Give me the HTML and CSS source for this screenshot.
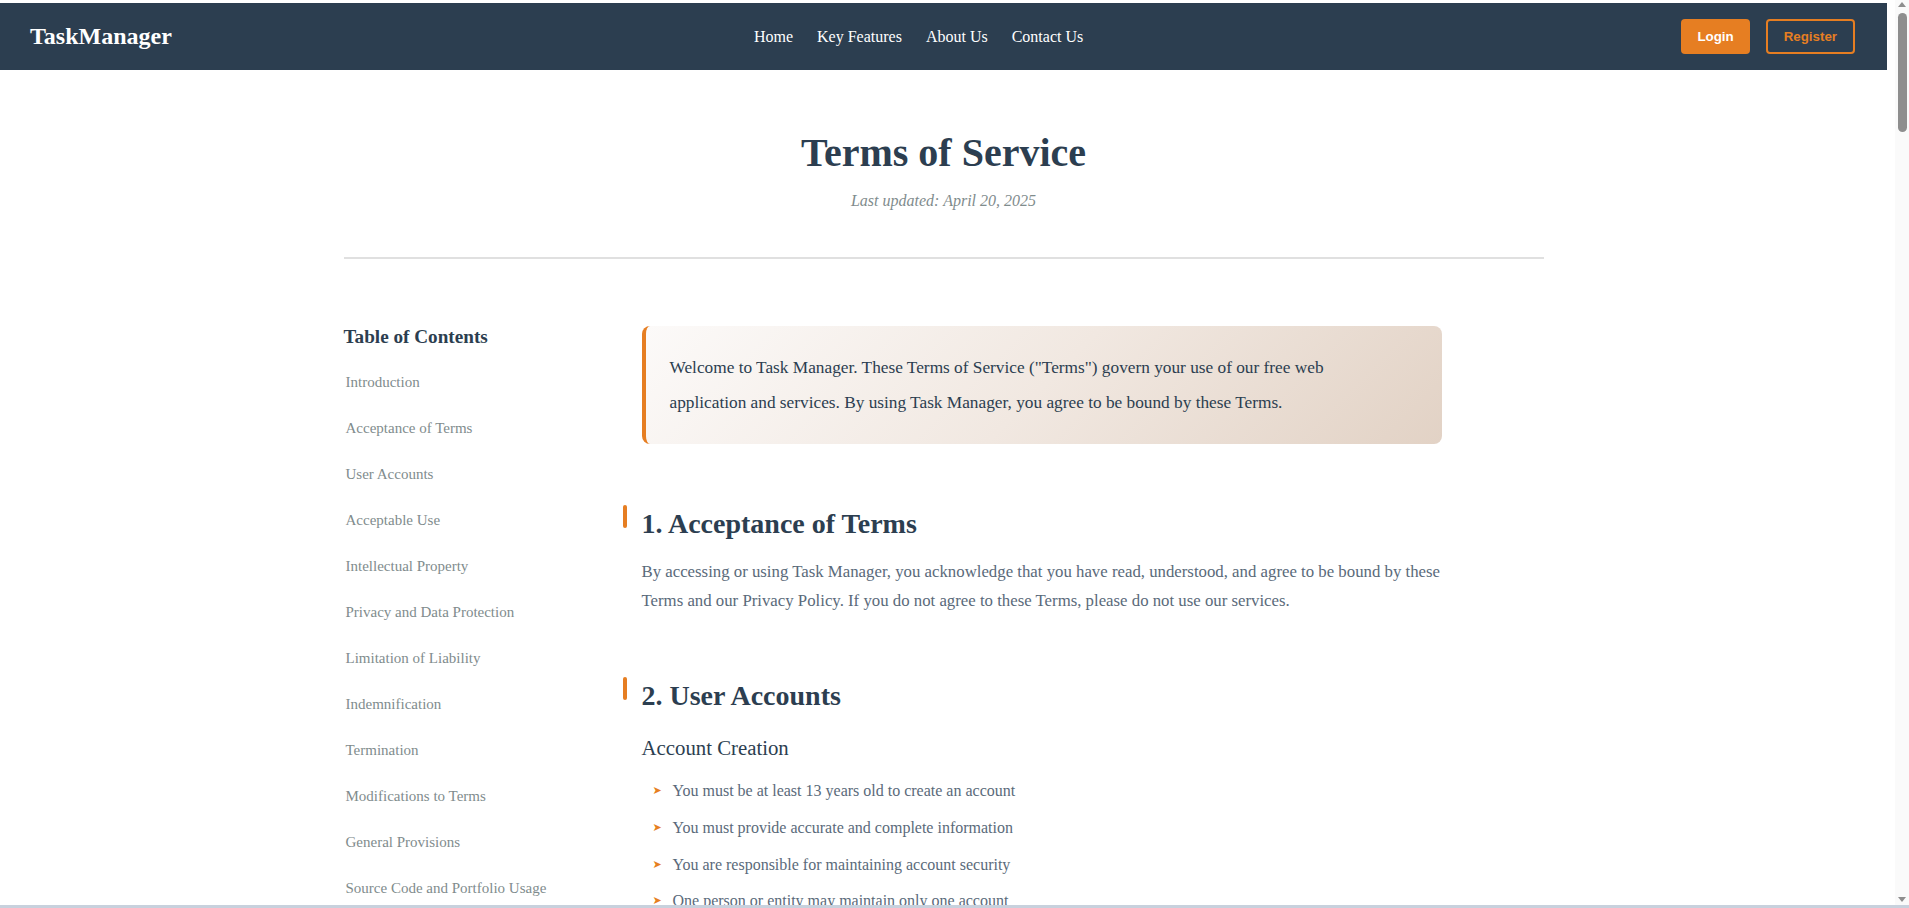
FILE: index.html
```html
<!DOCTYPE html>
<html lang="en">
<head>
<meta charset="utf-8">
<title>Terms of Service - TaskManager</title>
<link rel="stylesheet" href="styles.css">
</head>
<body>
<header class="site-header">
  <div class="logo">TaskManager</div>
  <nav class="main-nav">
    <ul>
      <li><a href="#">Home</a></li>
      <li><a href="#">Key Features</a></li>
      <li><a href="#">About Us</a></li>
      <li><a href="#">Contact Us</a></li>
    </ul>
  </nav>
  <div class="auth">
    <button class="btn btn-login">Login</button>
    <button class="btn btn-register">Register</button>
  </div>
</header>

<main class="page">
  <section class="page-head">
    <h1>Terms of Service</h1>
    <p class="updated">Last updated: April 20, 2025</p>
  </section>

  <div class="layout">
    <aside class="toc">
      <h3>Table of Contents</h3>
      <ul>
        <li><a href="#intro">Introduction</a></li>
        <li><a href="#acceptance">Acceptance of Terms</a></li>
        <li><a href="#accounts">User Accounts</a></li>
        <li><a href="#use">Acceptable Use</a></li>
        <li><a href="#ip">Intellectual Property</a></li>
        <li><a href="#privacy">Privacy and Data Protection</a></li>
        <li><a href="#liability">Limitation of Liability</a></li>
        <li><a href="#indemnification">Indemnification</a></li>
        <li><a href="#termination">Termination</a></li>
        <li><a href="#modifications">Modifications to Terms</a></li>
        <li><a href="#general">General Provisions</a></li>
        <li><a href="#source">Source Code and Portfolio Usage</a></li>
        <li><a href="#contact">Contact Information</a></li>
      </ul>
    </aside>

    <article class="terms">
      <div class="intro" id="intro">
        <p>Welcome to Task Manager. These Terms of Service ("Terms") govern your use of our free web application and services. By using Task Manager, you agree to be bound by these Terms.</p>
      </div>

      <section class="term" id="acceptance">
        <h2>1. Acceptance of Terms</h2>
        <p>By accessing or using Task Manager, you acknowledge that you have read, understood, and agree to be bound by these Terms and our Privacy Policy. If you do not agree to these Terms, please do not use our services.</p>
      </section>

      <section class="term" id="accounts">
        <h2>2. User Accounts</h2>
        <h3>Account Creation</h3>
        <ul>
          <li>You must be at least 13 years old to create an account</li>
          <li>You must provide accurate and complete information</li>
          <li>You are responsible for maintaining account security</li>
          <li>One person or entity may maintain only one account</li>
        </ul>
        <h3>Account Security</h3>
        <p>You are responsible for safeguarding your password and for all activities that occur under your account. You agree to notify us immediately of any unauthorized use of your account or any other breach of security.</p>
      </section>

      <section class="term" id="use">
        <h2>3. Acceptable Use</h2>
        <p>You agree to use Task Manager only for lawful purposes and in accordance with these Terms. You agree not to:</p>
        <ul>
          <li>Use the service in any way that violates any applicable law or regulation</li>
          <li>Attempt to gain unauthorized access to any part of the service or other accounts</li>
          <li>Upload or transmit viruses, malware, or any other malicious code</li>
          <li>Interfere with or disrupt the integrity or performance of the service</li>
          <li>Use automated scripts, bots, or scrapers to access the service</li>
          <li>Harass, abuse, or harm other users of the service</li>
          <li>Impersonate any person or entity or misrepresent your affiliation</li>
        </ul>
        <h3>Content Responsibility</h3>
        <p>You are solely responsible for the tasks, notes, and other content you create, upload, or share through Task Manager. We do not monitor user content but reserve the right to remove content that violates these Terms.</p>
      </section>

      <section class="term" id="ip">
        <h2>4. Intellectual Property</h2>
        <h3>Our Content</h3>
        <p>The Task Manager name, logo, design, and all related software, text, and graphics are the property of Task Manager and are protected by copyright, trademark, and other intellectual property laws.</p>
        <h3>Your Content</h3>
        <p>You retain all rights to the content you create in Task Manager. By using the service, you grant us a limited license to store, process, and display your content solely for the purpose of providing the service to you.</p>
        <ul>
          <li>We will never sell your content to third parties</li>
          <li>We will not use your content for advertising purposes</li>
          <li>You may export or delete your content at any time</li>
        </ul>
      </section>

      <section class="term" id="privacy">
        <h2>5. Privacy and Data Protection</h2>
        <p>Your privacy is important to us. Our collection and use of personal information is described in our Privacy Policy, which is incorporated into these Terms by reference.</p>
        <ul>
          <li>We collect only the information necessary to provide the service</li>
          <li>Your data is stored securely and encrypted in transit</li>
          <li>We do not share your personal information without your consent</li>
          <li>You may request access to or deletion of your data at any time</li>
        </ul>
        <p>By using Task Manager, you consent to the collection and use of your information as described in the Privacy Policy.</p>
      </section>

      <section class="term" id="liability">
        <h2>6. Limitation of Liability</h2>
        <p>Task Manager is provided on an "as is" and "as available" basis without warranties of any kind, either express or implied. To the fullest extent permitted by law, we shall not be liable for:</p>
        <ul>
          <li>Any indirect, incidental, special, or consequential damages</li>
          <li>Loss of data, profits, or business opportunities</li>
          <li>Service interruptions, errors, or security breaches</li>
          <li>Any content or conduct of third parties on the service</li>
        </ul>
        <p>Because Task Manager is offered free of charge, our total liability to you for any claim shall not exceed zero dollars.</p>
      </section>

      <section class="term" id="indemnification">
        <h2>7. Indemnification</h2>
        <p>You agree to indemnify, defend, and hold harmless Task Manager and its contributors from and against any claims, liabilities, damages, losses, and expenses arising out of or in any way connected with:</p>
        <ul>
          <li>Your access to or use of the service</li>
          <li>Your violation of these Terms</li>
          <li>Your violation of any third-party rights</li>
          <li>Any content you submit or share through the service</li>
        </ul>
      </section>

      <section class="term" id="termination">
        <h2>8. Termination</h2>
        <h3>Termination by You</h3>
        <p>You may stop using Task Manager and delete your account at any time through your account settings. Upon deletion, your data will be permanently removed within 30 days.</p>
        <h3>Termination by Us</h3>
        <p>We may suspend or terminate your access to the service at any time, with or without notice, for conduct that we believe:</p>
        <ul>
          <li>Violates these Terms or applicable laws</li>
          <li>Is harmful to other users or to the service</li>
          <li>Creates risk or possible legal exposure for us</li>
        </ul>
        <p>All provisions of these Terms which by their nature should survive termination shall survive termination.</p>
      </section>

      <section class="term" id="modifications">
        <h2>9. Modifications to Terms</h2>
        <p>We reserve the right to modify these Terms at any time. When we make changes, we will update the "Last updated" date at the top of this page and, where appropriate, notify you by email or through the service.</p>
        <p>Your continued use of Task Manager after any changes take effect constitutes your acceptance of the revised Terms. If you do not agree to the new Terms, please stop using the service.</p>
      </section>

      <section class="term" id="general">
        <h2>10. General Provisions</h2>
        <h3>Governing Law</h3>
        <p>These Terms shall be governed by and construed in accordance with the laws of the jurisdiction in which Task Manager operates, without regard to its conflict of law provisions.</p>
        <h3>Severability</h3>
        <p>If any provision of these Terms is held to be invalid or unenforceable, the remaining provisions will continue in full force and effect.</p>
        <h3>Entire Agreement</h3>
        <p>These Terms, together with our Privacy Policy, constitute the entire agreement between you and Task Manager regarding the use of the service.</p>
        <h3>Waiver</h3>
        <p>Our failure to enforce any right or provision of these Terms will not be considered a waiver of those rights.</p>
      </section>

      <section class="term" id="source">
        <h2>11. Source Code and Portfolio Usage</h2>
        <p>Task Manager is developed as a portfolio project. The source code may be publicly available for review and educational purposes, subject to the following conditions:</p>
        <ul>
          <li>You may view and study the source code for learning purposes</li>
          <li>You may not redistribute the code as your own work</li>
          <li>Commercial use of the code requires written permission</li>
          <li>Attribution must be given when referencing the project</li>
        </ul>
        <p>Screenshots and descriptions of Task Manager may be used in the developer's portfolio and professional materials.</p>
      </section>

      <section class="term" id="contact">
        <h2>12. Contact Information</h2>
        <p>If you have any questions about these Terms of Service, please contact us:</p>
        <ul>
          <li>By email: support@taskmanager.app</li>
          <li>Through the Contact Us page on our website</li>
        </ul>
      </section>
    </article>
  </div>
</main>

<footer class="site-footer">
  <p>&copy; 2025 TaskManager. All rights reserved.</p>
</footer>

<div class="scrollbar" aria-hidden="true">
  <span class="sb-arrow sb-up"></span>
  <span class="sb-thumb"></span>
  <span class="sb-arrow sb-down"></span>
</div>
<div class="frame-line"></div>
</body>
</html>
```

FILE: styles.css
```css
html {
  margin: 0;
  padding: 0;
  scrollbar-width: none;
}

html::-webkit-scrollbar {
  display: none;
}

body {
  margin: 3px 22px 0 0;
  padding: 0;
  background: #ffffff;
  font-family: "Liberation Serif", "Times New Roman", serif;
  color: #2c3e50;
}

/* Header */
.site-header {
  display: flex;
  align-items: center;
  justify-content: space-between;
  background: #2c3e50;
  padding: 16px 32px 16px 30px;
}

.logo {
  font-size: 24px;
  font-weight: bold;
  color: #ffffff;
}

.main-nav ul {
  display: flex;
  gap: 24px;
  list-style: none;
  margin: 0;
  padding: 0;
}

.main-nav a {
  color: #ffffff;
  text-decoration: none;
  font-size: 16px;
}

.auth {
  display: flex;
  gap: 16px;
  margin-left: 16px;
}

.btn {
  font-family: "Liberation Sans", Arial, sans-serif;
  font-size: 13.333px;
  font-weight: bold;
  padding: 8px 16px;
  border-radius: 4px;
  cursor: pointer;
}

.btn-login {
  background: #e67e22;
  color: #ffffff;
  border: none;
}

.btn-register {
  background: transparent;
  color: #e67e22;
  border: 2px solid #e67e22;
}

/* Page */
.page {
  max-width: 1200px;
  margin: 0 auto;
}

.page-head {
  text-align: center;
  padding: 59px 0 47px;
  border-bottom: 2px solid #e0e0e0;
}

.page-head h1 {
  font-size: 40px;
  font-weight: bold;
  margin: 0 0 16px;
  color: #2c3e50;
}

.updated {
  margin: 0;
  font-size: 16px;
  font-style: italic;
  color: #7f8c8d;
}

.layout {
  display: grid;
  grid-template-columns: 250px 1fr;
  gap: 48px;
  margin-top: 67px;
}

/* TOC */
.toc {
  align-self: start;
  position: sticky;
  top: 20px;
}

.toc h3 {
  font-size: 19.2px;
  font-weight: bold;
  margin: 0 0 17px;
  color: #2c3e50;
}

.toc ul {
  list-style: none;
  margin: 0;
  padding: 0;
}

.toc li {
  margin-bottom: 12px;
}

.toc a {
  display: block;
  padding: 8px 0 8px 2px;
  font-size: 15px;
  line-height: 18px;
  color: #7f8c8d;
  text-decoration: none;
}

/* Terms content */
.terms {
  max-width: 800px;
}

.intro {
  background: linear-gradient(135deg, #fcfaf9 0%, #f1e8e1 50%, #e2d2c5 100%);
  border-left: 4px solid #e67e22;
  border-radius: 8px;
  padding: 24px 44px 24px 24px;
  margin-bottom: 64px;
}

.intro p {
  margin: 0;
  font-size: 17.3px;
  line-height: 35.2px;
  color: #2c3e50;
}

.term {
  margin-bottom: 64px;
}

.term h2 {
  position: relative;
  font-size: 28px;
  font-weight: bold;
  margin: 0 0 18px;
  color: #2c3e50;
}

.term h2::before {
  content: "";
  position: absolute;
  left: -19px;
  top: -3px;
  width: 4px;
  height: 23px;
  background: #e67e22;
  border-radius: 2px;
}

.term h3 {
  font-size: 20.8px;
  font-weight: normal;
  margin: 24px 0 17px;
  color: #2c3e50;
}

.term p {
  font-size: 16.8px;
  line-height: 28.8px;
  color: #5a6a7a;
  margin: 0 0 16px;
}

.term ul {
  list-style: none;
  margin: 0 0 16px;
  padding: 0;
}

.term li {
  position: relative;
  padding-left: 31px;
  margin-bottom: 8px;
  font-size: 16px;
  line-height: 28.8px;
  color: #5a6a7a;
}

.term li::before {
  content: "\27A4";
  position: absolute;
  left: 11px;
  top: 0;
  font-family: "DejaVu Sans", sans-serif;
  font-size: 11px;
  line-height: 28.8px;
  color: #e67e22;
}

/* Footer */
.site-footer {
  background: #2c3e50;
  color: #ecf0f1;
  text-align: center;
  padding: 32px;
  margin-top: 64px;
}

.site-footer p {
  margin: 0;
  font-size: 15px;
}

/* Window chrome imitation: scrollbar + bottom frame line */
.scrollbar {
  position: fixed;
  top: 0;
  right: 0;
  bottom: 3px;
  width: 14px;
  background: #fafafa;
}

.sb-thumb {
  position: absolute;
  top: 13px;
  left: 3px;
  width: 9px;
  height: 119px;
  border-radius: 5px;
  background: #8e8e8e;
}

.sb-arrow {
  position: absolute;
  left: 3px;
  width: 0;
  height: 0;
  border-left: 4.5px solid transparent;
  border-right: 4.5px solid transparent;
}

.sb-up {
  top: 2px;
  border-bottom: 5px solid #8e8e8e;
}

.sb-down {
  bottom: 3px;
  border-top: 5px solid #8e8e8e;
}

.frame-line {
  position: fixed;
  left: 0;
  right: 0;
  bottom: 0;
  height: 3px;
  background: #c8d1dd;
}
```
